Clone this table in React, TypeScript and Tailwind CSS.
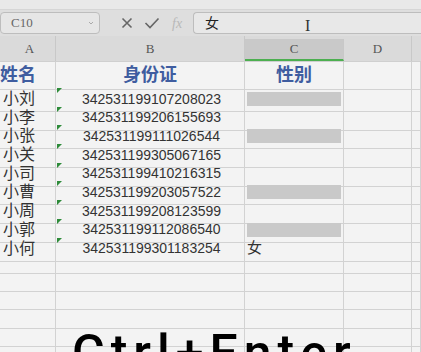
import React from 'react';

const rows = [
  { name: '小刘', id: '342531199107208023', mask: true, sex: '' },
  { name: '小李', id: '342531199206155693', mask: false, sex: '' },
  { name: '小张', id: '342531199111026544', mask: true, sex: '' },
  { name: '小关', id: '342531199305067165', mask: false, sex: '' },
  { name: '小司', id: '342531199410216315', mask: false, sex: '' },
  { name: '小曹', id: '342531199203057522', mask: true, sex: '' },
  { name: '小周', id: '342531199208123599', mask: false, sex: '' },
  { name: '小郭', id: '342531199112086540', mask: true, sex: '' },
  { name: '小何', id: '342531199301183254', mask: false, sex: '女' },
];

const cols = 'grid grid-cols-[56px_189px_99px_68px_1fr]';
const cell = 'border-r border-b border-[#d2d2d2]';

const App: React.FC = () => {
  return (
    <div
      className="relative w-[421px] h-[352px] overflow-hidden bg-[#efefef] text-[#333]"
      style={{ fontFamily: '"Liberation Sans", "Noto Sans CJK SC", sans-serif' }}
    >
      {/* top strip */}
      <div className="h-[10px] bg-[#e9e9e9] border-b border-[#d6d6d6]" />

      {/* formula bar */}
      <div className="h-[26px] bg-[#dedede] flex items-center">
        <div className="w-[100px] h-[22px] rounded-[4px] border border-[#bdbdbd] bg-[#e6e6e6] flex items-center justify-between pl-[10px] pr-[5px]">
          <span className="text-[13px] text-[#666]" style={{ fontFamily: '"Liberation Serif", serif' }}>C10</span>
          <svg width="6" height="6" viewBox="0 0 6 6">
            <path d="M1 2 L3 4 L5 2" fill="none" stroke="#aaa" strokeWidth="1" />
          </svg>
        </div>
        <div className="flex items-center ml-[20px] gap-[10px]">
          <svg width="14" height="14" viewBox="0 0 14 14">
            <path d="M2.5 2.5 L11.5 11.5 M11.5 2.5 L2.5 11.5" stroke="#666" strokeWidth="1.6" />
          </svg>
          <svg width="16" height="14" viewBox="0 0 16 14">
            <path d="M1.5 7 L6 11.5 L14.5 2.5" fill="none" stroke="#666" strokeWidth="1.6" />
          </svg>
          <span className="text-[14px] italic text-[#b8b8b8] ml-[2px]" style={{ fontFamily: '"Liberation Serif", serif' }}>fx</span>
        </div>
        <div className="relative ml-[11px] flex-1 h-[22px] rounded-l-[4px] border border-r-0 border-[#bdbdbd] bg-[#e8e8e8] flex items-center pl-[11px]">
          <span className="text-[14px] text-[#222]">女</span>
          <span className="absolute left-[111px] top-[1px] text-[16px] text-[#333]" style={{ fontFamily: '"Liberation Serif", serif' }}>I</span>
        </div>
      </div>

      {/* column headers */}
      <div className={`${cols} h-[26px] bg-[#dadada] border-b border-[#cfcfcf] text-[13px] text-[#555]`} style={{ fontFamily: '"Liberation Serif", serif' }}>
        <div className="flex items-center justify-center border-r border-[#c8c8c8] pl-[4px]">A</div>
        <div className="flex items-center justify-center border-r border-[#c8c8c8]">B</div>
        <div className="flex items-center justify-center border-r border-[#c8c8c8] bg-[#c9c9c9] border-b-2 border-b-[#4caf50] mt-[3px]">C</div>
        <div className="flex items-center justify-center border-r border-[#c8c8c8]">D</div>
        <div />
      </div>

      {/* header row */}
      <div className={`${cols} h-[25px] bg-[#f3f3f3] font-bold text-[18px] text-[#3f5da0]`}>
        <div className={`${cell} flex items-center`}>姓名</div>
        <div className={`${cell} flex items-center justify-center`}>身份证</div>
        <div className={`${cell} flex items-center justify-center`}>性别</div>
        <div className={cell} />
        <div className={cell} />
      </div>

      {/* data rows */}
      {rows.map((r) => (
        <div key={r.id} className={`${cols} h-[18.7px] bg-[#f3f3f3]`}>
          <div className={`${cell} flex items-center pl-[3px] text-[16px] text-[#333]`}>{r.name}</div>
          <div className={`${cell} relative flex items-center justify-center text-[14px] pl-[3px]`}>
            <span className="absolute left-[1px] top-[1px] w-0 h-0 border-t-[5px] border-r-[5px] border-t-[#2e8b3a] border-r-transparent" />
            {r.id}
          </div>
          <div className={`${cell} flex items-center px-[2px] text-[15px]`}>
            {r.mask ? <div className="w-full h-[14px] bg-[#c9c9c9]" /> : r.sex}
          </div>
          <div className={cell} />
          <div className={cell} />
        </div>
      ))}

      {/* empty rows */}
      {[0, 1, 2, 3, 4, 5].map((i) => (
        <div key={i} className={`${cols} h-[18.4px] bg-[#f3f3f3]`}>
          <div className={cell} />
          <div className={cell} />
          <div className={cell} />
          <div className={cell} />
          <div className={cell} />
        </div>
      ))}

      {/* caption */}
      <div
        className="absolute left-[72px] top-[328px] text-[50px] leading-none text-black tracking-[6px] font-medium"
        style={{ fontFamily: 'Roboto, sans-serif' }}
      >
        Ctrl+Enter
      </div>
    </div>
  );
};

export default App;
